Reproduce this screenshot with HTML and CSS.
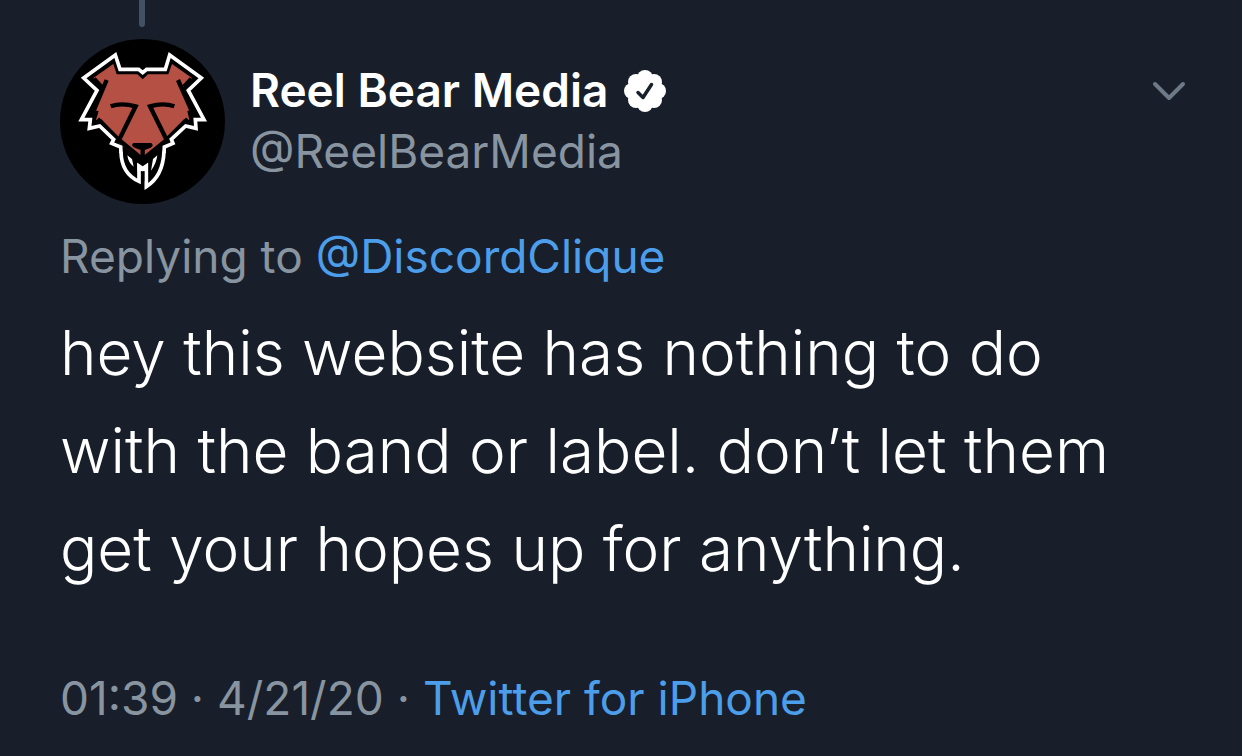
FILE: index.html
```html
<!DOCTYPE html>
<html lang="en">
<head>
<meta charset="utf-8">
<meta name="viewport" content="width=device-width, initial-scale=1">
<title>Reel Bear Media on Twitter</title>
<link rel="stylesheet" href="styles.css">
</head>
<body>
<article class="tweet">
  <div class="thread"></div>
  <header class="header">
    <svg class="avatar" viewBox="30 117 495 495" role="img" aria-label="Reel Bear Media">
      <circle cx="277.500" cy="364.500" r="247.500" fill="#000"/>
      <path fill="#b55144" d="M130 234 190 192 200 223H262L278 238 294 223H355L366 192 426 234 404 258 397 264 424 329 412 333 418 360 402 358 350 410 346 430 278 482 208 430 204 410 154 358 138 360 146 334 131 329 163 264 155 258Z"/>
      <g fill="none" stroke="#000" stroke-width="13">
        <path d="M170 240 132 330M154 260 132 236M384 240 424 330M402 260 424 236"/>
        <path d="M182 319Q214 307 257 319L207 420M373 319Q340 307 300 319L350 420"/>
        <path d="M143 357 207 420 278 478 350 420 413 357"/>
        <path d="M278 438V485"/>
      </g>
      <path fill="#000" d="M250 429H304Q313 437 302 443L286 449H270L254 443Q241 437 250 429Z"/>
      <g fill="none" stroke="#fff" stroke-width="11" stroke-linejoin="miter">
        <path d="M213 459 212 441 185 430 191 418 149 378 118 385 121 359 94 359 141 271 101 234 196 165 210 208H266L278 218 290 208H346L359 165 454 234 415 271 462 359 436 359 438 385 407 378 364 418 369 430 343 441 342 459"/>
        <path d="M213 455Q214 520 267 544V500L278 509 289 500V560Q339 528 342 455"/>
      </g>
      <path fill="#fff" d="M232 466 246 477 251 500Q235 489 232 466ZM322 466 309 477 303 512Q319 491 322 466ZM262 488 278 499 294 488V513H262Z"/>
      <path fill="#000" d="M273 514H283V544H273Z"/>
    </svg>
    <div class="names">
      <div class="name-row">
        <span class="name">Reel Bear Media</span>
        <svg class="badge" viewBox="0 0 42 42" role="img" aria-label="Verified account">
          <g fill="#fff"><circle cx="21" cy="21" r="17"/><circle cx="21" cy="8" r="8"/><circle cx="30" cy="12" r="8"/><circle cx="34" cy="21" r="8"/><circle cx="30" cy="30" r="8"/><circle cx="21" cy="34" r="8"/><circle cx="12" cy="30" r="8"/><circle cx="8" cy="21" r="8"/><circle cx="12" cy="12" r="8"/></g>
          <path d="M14 22.500 19 27.500 27.500 14.500" fill="none" stroke="#18202b" stroke-width="3.500" stroke-linecap="round" stroke-linejoin="round"/>
        </svg>
      </div>
      <div class="handle">@ReelBearMedia</div>
    </div>
    <button class="more" type="button" aria-label="More options">
      <svg class="chevron" viewBox="0 0 34 20"><path d="M3 3 17 17 31 3" fill="none" stroke="#6d7986" stroke-width="4" stroke-linecap="round" stroke-linejoin="round"/></svg>
    </button>
  </header>
  <p class="reply">Replying to <a href="#">@DiscordClique</a></p>
  <p class="message">hey this website has nothing to do<br>with the band or label. don’t let them<br>get your hopes up for anything.</p>
  <footer class="meta">01:39 · 4/21/20 · <a href="#">Twitter for iPhone</a></footer>
</article>
</body>
</html>
```
FILE: styles.css
```css
* { box-sizing: border-box; }
body {
  margin: 0;
  background: #181f2a;
  color: #fff;
  font-family: Inter, "Liberation Sans", sans-serif;
}
.tweet { padding: 0 56px 0 60px; }
.thread {
  width: 6px;
  height: 27px;
  margin-left: 79px;
  background: #425262;
  border-radius: 0 0 3px 3px;
}
.header {
  display: flex;
  align-items: flex-start;
  margin-top: 12px;
}
.avatar { width: 165px; height: 165px; flex: none; }
.names {
  flex: 1;
  margin: 21px 0 0 25px;
  font-size: 46px;
  line-height: 61px;
}
.name-row { display: flex; align-items: center; gap: 16px; }
.name { font-weight: 600; }
.badge { width: 42px; height: 42px; }
.handle, .reply, .meta { color: #8894a0; }
.more {
  margin: 42px 0 0;
  padding: 0;
  border: 0;
  background: none;
}
.chevron { display: block; width: 34px; height: 20px; }
.reply, .meta { font-size: 46px; line-height: 60px; }
.reply { margin: 22px 0 0; }
.message {
  margin: 18px 0 0;
  font-size: 62px;
  font-weight: 300;
  line-height: 98px;
}
.meta { margin-top: 70px; }
a { color: #4c9eeb; text-decoration: none; }
```
